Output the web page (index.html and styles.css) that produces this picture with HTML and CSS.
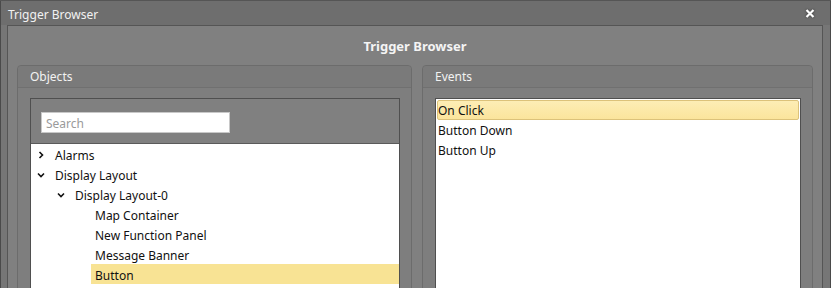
FILE: index.html
```html
<!DOCTYPE html>
<html lang="en">
<head>
    <meta charset="UTF-8">
    <title>Trigger Browser</title>
    <link rel="stylesheet" href="styles.css">
</head>
<body>
    <div class="window">
        <div class="titlebar">
            <span class="title">Trigger Browser</span>
            <svg class="close" width="10" height="9" viewBox="0 0 10 9">
                <path d="M1.5 1 L8.5 8 M8.5 1 L1.5 8" stroke="#fff" stroke-width="2.2" fill="none"/>
            </svg>
        </div>
        <div class="frame">
            <h1 class="heading">Trigger Browser</h1>
            <div class="panels">
                <div class="panel">
                    <div class="panel-header">Objects</div>
                    <div class="panel-body">
                        <div class="box">
                            <div class="search-area">
                                <input type="text" class="search" placeholder="Search">
                            </div>
                            <ul class="tree">
                                <li class="node lvl0"><svg class="arrow" width="8" height="8" viewBox="0 0 8 8"><path d="M2.5 1 L5.5 4 L2.5 7" stroke="#111" stroke-width="1.6" fill="none"/></svg>Alarms</li>
                                <li class="node lvl0"><svg class="arrow" width="8" height="8" viewBox="0 0 8 8"><path d="M1 2.5 L4 5.5 L7 2.5" stroke="#111" stroke-width="1.6" fill="none"/></svg>Display Layout</li>
                                <li class="node lvl1"><svg class="arrow" width="8" height="8" viewBox="0 0 8 8"><path d="M1 2.5 L4 5.5 L7 2.5" stroke="#111" stroke-width="1.6" fill="none"/></svg>Display Layout-0</li>
                                <li class="node lvl2"><span class="label">Map Container</span></li>
                                <li class="node lvl2"><span class="label">New Function Panel</span></li>
                                <li class="node lvl2"><span class="label">Message Banner</span></li>
                                <li class="node lvl2"><span class="label selected">Button</span></li>
                            </ul>
                        </div>
                    </div>
                </div>
                <div class="panel">
                    <div class="panel-header">Events</div>
                    <div class="panel-body">
                        <ul class="events">
                            <li class="event selected">On Click</li>
                            <li class="event">Button Down</li>
                            <li class="event">Button Up</li>
                        </ul>
                    </div>
                </div>
            </div>
        </div>
    </div>
</body>
</html>
```

FILE: styles.css
```css
body {
    margin: 0;
    padding: 0;
    height: 288px;
    overflow: hidden;
    background-color: #555;
    font-family: "Noto Sans", "Open Sans", sans-serif;
    font-size: 12px;
}
.window {
    height: 287px;
    margin-top: 1px;
    border-left: 1px solid #4a4a4a;
    border-right: 1px solid #4a4a4a;
    background-color: #767676;
}
.titlebar {
    height: 24px;
    box-sizing: border-box;
    display: flex;
    align-items: center;
    justify-content: space-between;
    padding: 2px 15px 0 7px;
    background-color: #6e6e6e;
    color: #f2f2f2;
    font-size: 12px;
}
.close {
    margin-top: -2px;
    filter: drop-shadow(0 0 1px #333);
}
.frame {
    margin: 0 7px 0 6px;
    height: 300px;
    border: 1px solid #555;
    border-bottom: none;
    background-color: #808080;
}
.heading {
    margin: 0;
    height: 39px;
    line-height: 40px;
    text-align: center;
    font-size: 13px;
    font-weight: bold;
    color: #f4f4f4;
}
.panels {
    display: grid;
    grid-template-columns: 395px 391px;
    column-gap: 10px;
    padding: 0 9px;
}
.panel {
    border: 1px solid #6c6c6c;
    border-radius: 4px 4px 0 0;
    background-color: #7e7e7e;
    height: 260px;
}
.panel-header {
    height: 21px;
    line-height: 22px;
    padding-left: 12px;
    color: #f2f2f2;
    background-color: #7a7a7a;
    border-bottom: 1px solid #707070;
    border-radius: 4px 4px 0 0;
}
.panel-body {
    padding: 10px 11px 0 12px;
}
.box {
    border: 1px solid #4f4f4f;
    background-color: #808080;
}
.search-area {
    padding: 13px 10px 10px;
    border-bottom: 1px solid #5a5a5a;
}
.search {
    display: block;
    width: 189px;
    height: 21px;
    box-sizing: border-box;
    border: 1px solid #c8c8c8;
    padding: 1px 4px 0;
    font-family: inherit;
    font-size: 12px;
    outline: none;
}
.search::placeholder {
    color: #9a9a9a;
}
.tree, .events {
    list-style: none;
    margin: 0;
    padding: 0;
    background-color: #fff;
    color: #111;
    height: 200px;
}
.node {
    height: 20px;
    box-sizing: border-box;
    padding-top: 2px;
    display: flex;
    align-items: center;
}
.lvl0 {
    padding-left: 6px;
}
.lvl1 {
    padding-left: 26px;
}
.lvl2 {
    padding-left: 60px;
}
.arrow {
    margin-right: 10px;
}
.label {
    padding: 0 4px;
}
.label.selected {
    flex: 1;
    align-self: stretch;
    margin-top: -2px;
    padding-top: 2px;
    display: flex;
    align-items: center;
    background-color: #f8e394;
}
.events {
    border: 1px solid #4f4f4f;
    padding: 1px;
}
.event {
    height: 20px;
    line-height: 22px;
    padding-left: 1px;
    box-sizing: border-box;
}
.event.selected {
    background: linear-gradient(#fdedb5, #fbe49c);
    border: 1px solid #dcc27a;
    border-radius: 2px;
    padding-left: 0;
    line-height: 20px;
}
```
